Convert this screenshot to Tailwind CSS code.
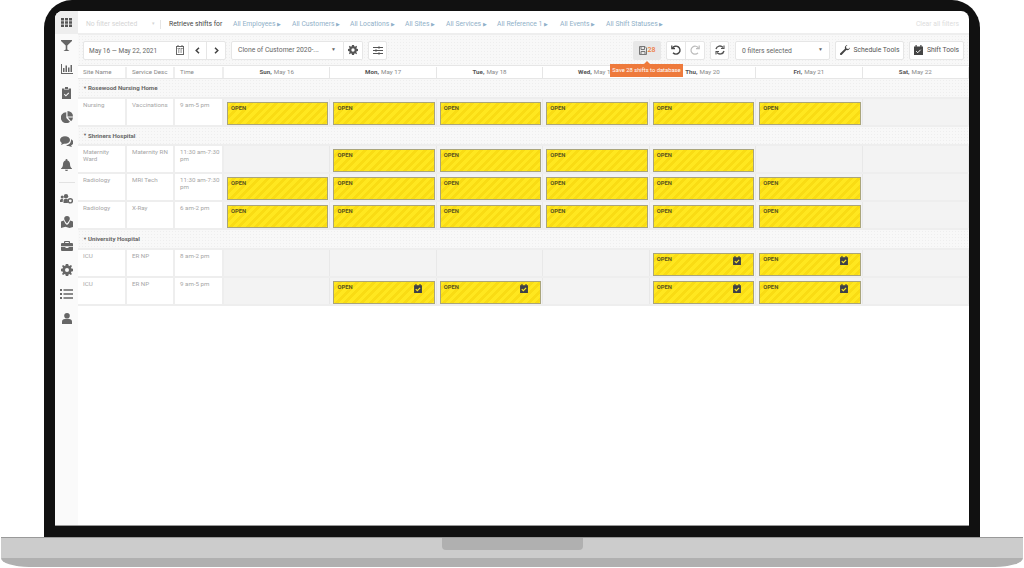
<!DOCTYPE html>
<html>

<head>
    <title>Schedule</title>
    <script src="https://cdn.jsdelivr.net/npm/@tailwindcss/browser@4"></script>
</head>

<body class="m-0 bg-white overflow-hidden font-['Roboto','Liberation_Sans',sans-serif]">
    <div class="w-[1024px] h-[568px] flex flex-col">
        <!-- laptop lid -->
        <div class="ml-[44px] w-[936px] h-[537px] shrink-0 bg-[#111111] rounded-t-[28px] p-[11px]">
            <div class="w-full h-full bg-white rounded-t-[8px] overflow-hidden flex border-b border-[#999999]">
                <!-- sidebar -->
                <div class="w-[23px] shrink-0 flex flex-col items-center text-[#666666] bg-[#fafafa]">
                    <div class="w-full h-[23px] bg-[#eeeeee] flex items-center justify-center">
                        <svg width="11" height="9" viewBox="0 0 11 9" fill="#555555"><path d="M0 0h3v2.500H0zM4 0h3v2.500H4zM8 0h3v2.500H8zM0 3.200h3v2.500H0zM4 3.200h3v2.500H4zM8 3.200h3v2.500H8zM0 6.500h3V9H0zM4 6.500h3V9H4zM8 6.500h3V9H8z"/></svg>
                    </div>
                    <div class="h-[23px] flex items-center justify-center">
                        <svg width="11" height="11" viewBox="0 0 11 11" fill="currentColor"><path d="M0 0h11v1L6.300 5.600V9.500L8.500 11H2.500L4.700 9.500V5.600L0 1z"/></svg>
                    </div>
                    <div class="h-[24px] flex items-center justify-center">
                        <svg width="12" height="10" viewBox="0 0 12 10" fill="currentColor"><path d="M0 0h1v9h11v1H0z"/><path d="M2 4h1.500v4H2zM4.500 1.500H6V8H4.500zM7 3.500h1.500V8H7zM9.500 1H11v7H9.500z"/></svg>
                    </div>
                    <div class="h-[24px] flex items-center justify-center">
                        <svg width="9" height="12" viewBox="0 0 9 12" fill="currentColor"><path d="M0 1.500h2.500V3h4V1.500H9V12H0zM3 0h3v2.500H3z"/><path d="M2.300 7.200l1.600 1.600 2.900-3" fill="none" stroke="#fafafa" stroke-width="1.100"/></svg>
                    </div>
                    <div class="h-[24px] flex items-center justify-center">
                        <svg width="12" height="12" viewBox="0 0 12 12" fill="currentColor"><path d="M5.300 1.200v5.900l3.700 3.700A5.500 5.500 0 1 1 5.300 1.200z"/><path d="M6.500 0A5.500 5.500 0 0 1 12 5.500H6.500z"/><path d="M6.900 6.500H12a5.500 5.500 0 0 1-2 3.700z"/></svg>
                    </div>
                    <div class="h-[24px] flex items-center justify-center">
                        <svg width="13" height="11" viewBox="0 0 13 11" fill="currentColor"><ellipse cx="5" cy="4" rx="5" ry="3.800"/><path d="M2 6.500L1 9l3.500-1.500z"/><path d="M11 3.200a4 3.500 0 0 1 0 6.300l1 1.500-3.600-1a6 6 0 0 1-2.400-.6c3-.2 5.300-2.500 5-6.200z"/></svg>
                    </div>
                    <div class="h-[23px] flex items-center justify-center">
                        <svg width="11" height="12" viewBox="0 0 11 12" fill="currentColor"><path d="M5.500 0a1 1 0 0 1 1 1v.4C8.300 2 9 3.400 9 5c0 2.500.7 3.400 2 4.500V10H0v-.5C1.300 8.400 2 7.500 2 5c0-1.600.7-3 2.500-3.600V1a1 1 0 0 1 1-1zM4 10.700h3a1.500 1.300 0 0 1-3 0z"/></svg>
                    </div>
                    <div class="w-[16px] h-px bg-[#e2e2e2] mt-[6px] mb-[4px]"></div>
                    <div class="h-[23px] flex items-center justify-center">
                        <svg width="13" height="10" viewBox="0 0 13 10" fill="currentColor"><circle cx="2.200" cy="3" r="1.500"/><circle cx="6" cy="2.300" r="2.200"/><path d="M0 8V6.500C0 5.500.8 5 2 5h1L2.700 8zM3.500 9V6.500C3.500 5.300 4.500 5 6 5c.8 0 1.400.1 1.900.4V9z"/><circle cx="10.300" cy="6.800" r="2.100" fill="none" stroke="currentColor" stroke-width="1.400"/></svg>
                    </div>
                    <div class="h-[24px] flex items-center justify-center">
                        <svg width="12" height="12" viewBox="0 0 12 12" fill="currentColor"><path d="M6 0a2.800 2.800 0 0 1 2.800 2.800C8.800 4.500 6 7.500 6 7.500S3.200 4.500 3.200 2.800A2.800 2.800 0 0 1 6 0z"/><path d="M0 5.500l2.800-1 1.500 3L6 9l1.700-1.500 1.500-3 2.800 1V11l-3.500 1-4-1.300L0 12z"/></svg>
                    </div>
                    <div class="h-[24px] flex items-center justify-center">
                        <svg width="12" height="10" viewBox="0 0 12 10" fill="currentColor"><path d="M4 0h4a1 1 0 0 1 1 1v1h2a1 1 0 0 1 1 1v2.200H0V3a1 1 0 0 1 1-1h2V1a1 1 0 0 1 1-1zm.2 1v1h3.600V1zM0 6h4.500v1h3V6H12v3a1 1 0 0 1-1 1H1a1 1 0 0 1-1-1z"/></svg>
                    </div>
                    <div class="h-[24px] flex items-center justify-center">
                        <svg width="12" height="12" viewBox="0 0 12 12" fill="currentColor"><path fill-rule="evenodd" d="M4.800 0h2.400l.3 1.600 1 .4L9.900 1l1.100 1.100-1 1.400.4 1 1.600.3v2.400l-1.600.3-.4 1-.1.100 1 1.300L9.900 11l-1.400-1-1 .4-.3 1.600H4.800l-.3-1.600-1-.4-1.400 1L1 9.900l1-1.300-.4-1.100L0 7.200V4.800l1.600-.3.400-1-1-1.400L2.100 1l1.400 1 1-.4zM6 4a2 2 0 1 0 0 4 2 2 0 0 0 0-4z"/></svg>
                    </div>
                    <div class="h-[24px] flex items-center justify-center">
                        <svg width="13" height="10" viewBox="0 0 13 10" fill="currentColor"><path d="M0 0h2v2H0zM3.500 .2H13v1.600H3.500zM0 4h2v2H0zM3.500 4.200H13v1.600H3.500zM0 8h2v2H0zM3.500 8.200H13v1.600H3.500z"/></svg>
                    </div>
                    <div class="h-[24px] flex items-center justify-center">
                        <svg width="10" height="11" viewBox="0 0 10 11" fill="currentColor"><circle cx="5" cy="2.800" r="2.800"/><path d="M0 11V8.600C0 7 1.200 6 2.800 6h4.400C8.800 6 10 7 10 8.600V11z"/></svg>
                    </div>
                </div>

                <!-- main -->
                <div class="flex-1 min-w-0 flex flex-col">
                    <!-- filter bar -->
                    <div class="h-[24px] shrink-0 flex items-center pl-[8px] pr-[10px] pt-[4px] text-[6.8px] border-b-2 border-[#eeeeee] text-[#8fb0c8] whitespace-nowrap">
                        <span class="text-[#d4d4d4] w-[66px]">No filter selected</span>
                        <span class="text-[#d4d4d4] text-[5px]">▾</span>
                        <span class="w-px h-[9px] bg-[#e5e5e5] ml-[5px] mr-[8px]"></span>
                        <span class="text-[#444444] w-[64px]">Retrieve shifts for</span>
                        <span class="w-[59px]">All Employees <span class="text-[5px]">▶</span></span>
                        <span class="w-[58px]">All Customers <span class="text-[5px]">▶</span></span>
                        <span class="w-[55px]">All Locations <span class="text-[5px]">▶</span></span>
                        <span class="w-[41px]">All Sites <span class="text-[5px]">▶</span></span>
                        <span class="w-[51px]">All Services <span class="text-[5px]">▶</span></span>
                        <span class="w-[63px]">All Reference 1 <span class="text-[5px]">▶</span></span>
                        <span class="w-[46px]">All Events <span class="text-[5px]">▶</span></span>
                        <span>All Shift Statuses <span class="text-[5px]">▶</span></span>
                        <span class="ml-auto text-[#dddddd]">Clear all filters</span>
                    </div>

                    <!-- toolbar -->
                    <div class="h-[30px] shrink-0 flex items-center pl-[5px] pr-[5px] bg-[#f8f8f8] bg-[radial-gradient(#eeeeee_0.5px,transparent_0.6px)] bg-[length:3px_3px] text-[#666666] text-[6.8px] whitespace-nowrap">
                        <div class="h-[19px] flex bg-white border border-[#e6e6e6] rounded-[2px] items-center">
                            <span class="w-[92px] pl-[5px] mt-[3px] text-[6.5px]">May 16 — May 22, 2021</span>
                            <svg class="mr-[4px]" width="8" height="10" viewBox="0 0 8 10" fill="none" stroke="#666666"><rect x=".5" y="1.500" width="7" height="8"/><path d="M0 3.500h8M2 0v2M6 0v2M2 5h4M2 7h4" stroke-dasharray="1 .6"/></svg>
                            <span class="w-[19px] h-full border-x border-[#e6e6e6] flex items-center justify-center">
                                <svg width="5" height="7" viewBox="0 0 5 7" fill="none" stroke="#444444" stroke-width="1.500"><path d="M4 .7L1.200 3.500 4 6.300"/></svg>
                            </span>
                            <span class="w-[18px] flex items-center justify-center">
                                <svg width="5" height="7" viewBox="0 0 5 7" fill="none" stroke="#444444" stroke-width="1.500"><path d="M1 .7l2.800 2.800L1 6.300"/></svg>
                            </span>
                        </div>
                        <div class="ml-[5px] w-[113px] h-[19px] flex items-center bg-white border border-[#e6e6e6] rounded-l-[2px] pl-[6px]">
                            <span class="w-[93px] mt-[1px]">Clone of Customer 2020-...</span>
                            <span class="text-[5px]">▼</span>
                        </div>
                        <div class="w-[19px] h-[19px] flex items-center justify-center bg-white border border-l-0 border-[#e6e6e6] rounded-r-[2px]">
                            <svg width="10" height="10" viewBox="0 0 12 12" fill="#555555"><path fill-rule="evenodd" d="M4.800 0h2.400l.3 1.600 1 .4L9.900 1l1.100 1.100-1 1.400.4 1 1.600.3v2.400l-1.600.3-.4 1-.1.100 1 1.300L9.900 11l-1.400-1-1 .4-.3 1.600H4.800l-.3-1.600-1-.4-1.400 1L1 9.900l1-1.300-.4-1.100L0 7.200V4.800l1.600-.3.400-1-1-1.400L2.100 1l1.400 1 1-.4zM6 4a2 2 0 1 0 0 4 2 2 0 0 0 0-4z"/></svg>
                        </div>
                        <div class="ml-[5px] w-[19px] h-[19px] flex items-center justify-center bg-white border border-[#e6e6e6] rounded-[2px]">
                            <svg width="10" height="9" viewBox="0 0 10 9" fill="none" stroke="#555555"><path d="M0 1.500h10M0 4.500h10M0 7.500h10"/><path d="M6 .5v2M3 3.500v2M6 6.500v2" stroke-width="1.500"/></svg>
                        </div>

                        <div class="relative ml-[246px] w-[28px] h-[19px] flex items-center justify-center gap-[1px] bg-[#e8e8e8] rounded-[2px]">
                            <svg width="8" height="9" viewBox="0 0 8 9" fill="none" stroke="#777777"><path d="M.5.500h5.500l1.500 1.500v6.500h-7z"/><path d="M2 .5v3h3.500v-3M2 8.500V5.500h4v3"/></svg>
                            <span class="text-[#ee7a3c] text-[7px] font-medium">28</span>
                            <!-- tooltip -->
                            <div class="absolute top-[23px] left-[-23px] w-[73px] h-[13px] bg-[#ee7a3c] text-white text-[5.8px] flex items-center justify-center z-10">
                                <span class="absolute -top-[3px] left-[34px] w-0 h-0 border-x-[3px] border-x-transparent border-b-[3px] border-b-[#ee7a3c]"></span>
                                Save 28 shifts to database
                            </div>
                        </div>

                        <div class="ml-[5px] w-[39px] h-[19px] flex bg-white border border-[#e6e6e6] rounded-[2px]">
                            <span class="w-1/2 border-r border-[#e6e6e6] flex items-center justify-center">
                                <svg width="10" height="10" viewBox="0 0 10 10" fill="none" stroke="#444444" stroke-width="1.400"><path d="M1.500 3.200A4 4 0 1 1 2 7.800"/><path d="M.8.500v3.200H4" stroke-width="1.200"/></svg>
                            </span>
                            <span class="w-1/2 flex items-center justify-center">
                                <svg width="10" height="10" viewBox="0 0 10 10" fill="none" stroke="#bbbbbb" stroke-width="1.200"><path d="M8.500 3.200A4 4 0 1 0 8 7.800"/><path d="M9.200.5v3.200H6"/></svg>
                            </span>
                        </div>
                        <div class="ml-[5px] w-[19px] h-[19px] flex items-center justify-center bg-white border border-[#e6e6e6] rounded-[2px]">
                            <svg width="10" height="10" viewBox="0 0 10 10" fill="none" stroke="#555555" stroke-width="1.400"><path d="M1 4a4 4 0 0 1 7-1.500M9 6a4 4 0 0 1-7 1.500"/><path d="M9 .5v3H6M1 9.500v-3h3" stroke-width="1.100"/></svg>
                        </div>
                        <div class="ml-[6px] w-[95px] h-[19px] flex items-center justify-between px-[6px] bg-white border border-[#e6e6e6] rounded-[2px]">
                            <span class="mt-[2px]">0 filters selected</span>
                            <span class="text-[5px]">▼</span>
                        </div>
                        <div class="ml-[5px] w-[69px] h-[19px] flex items-center justify-center gap-[4px] bg-white border border-[#e6e6e6] rounded-[2px] text-[#555555]">
                            <svg width="10" height="10" viewBox="0 0 10 10" fill="#444444"><path d="M10 2.500A2.800 2.800 0 0 1 6.300 5L1.800 9.700A1 1 0 0 1 .3 8.200L5 3.700A2.800 2.800 0 0 1 7.500 0L6 1.600l.4 2 2 .4z"/></svg>
                            <span class="mt-[1px]">Schedule Tools</span>
                        </div>
                        <div class="ml-[5px] w-[55px] h-[19px] flex items-center justify-center gap-[4px] bg-white border border-[#e6e6e6] rounded-[2px] text-[#555555]">
                            <svg width="9" height="10" viewBox="0 0 9 10" fill="#444444"><path d="M0 1.500h1.500V0h1.200v1.500h3.600V0h1.200v1.500H9V10H0z"/><path d="M2.200 6.200l1.500 1.500 3-3" fill="none" stroke="#ffffff"/></svg>
                            <span class="mt-[1px]">Shift Tools</span>
                        </div>
                    </div>

                    <!-- schedule grid, rows are filled in below -->
                    <div id="header" class="h-[14px] shrink-0 grid grid-cols-[49px_48px_49px_repeat(7,1fr)] text-[6.2px] text-[#888888] bg-white border-y border-[#e6e6e6] pt-[1px]"></div>
                    <div id="rows" class="flex flex-col"></div>
                </div>
            </div>
        </div>

        <!-- laptop base -->
        <div class="ml-[1px] w-[1022px] h-[30px] shrink-0 flex flex-col overflow-hidden rounded-b-[28px_9px] border-t border-[#999999]">
            <div class="h-[20px] shrink-0 bg-[#cccccc] flex justify-center">
                <div class="w-[141px] h-[12px] bg-[#b0b0b0] rounded-b-[4px]"></div>
            </div>
            <div class="flex-1 bg-[#b0b0b0]"></div>
        </div>
    </div>

    <script>
        const days = [
            ['Sun,', 'May 16'], ['Mon,', 'May 17'], ['Tue,', 'May 18'], ['Wed,', 'May 19'],
            ['Thu,', 'May 20'], ['Fri,', 'May 21'], ['Sat,', 'May 22']
        ];

        // group title, or [site, service, time, open days, days with a check icon]
        const schedule = [
            'Rosewood Nursing Home',
            ['Nursing', 'Vaccinations', '9 am-5 pm', [0, 1, 2, 3, 4, 5], []],
            'Shriners Hospital',
            ['Maternity<br>Ward', 'Maternity RN', '11:30 am-7:30 pm', [1, 2, 3, 4], []],
            ['Radiology', 'MRI Tech', '11:30 am-7:30 pm', [0, 1, 2, 3, 4, 5], []],
            ['Radiology', 'X-Ray', '6 am-2 pm', [0, 1, 2, 3, 4, 5], []],
            'University Hospital',
            ['ICU', 'ER NP', '8 am-2 pm', [4, 5], [4, 5]],
            ['ICU', 'ER NP', '9 am-5 pm', [1, 2, 4, 5], [1, 2, 4, 5]]
        ];

        const labelCell = 'pl-[5px] flex items-center border-r-2 border-[#eeeeee]';
        const bodyCell = 'pl-[5px] pt-[3px] leading-[7px] border-r-2 border-[#eeeeee]';
        const checkIcon = '<svg class="absolute right-[12px] top-[2px]" width="8" height="9" viewBox="0 0 7 8"><path d="M0 1h1.200V0h1v1h2.600V0h1v1H7v7H0z" fill="#3d4048"/><path d="M1.500 4.600l1.400 1.400 2.500-2.600" fill="none" stroke="#ffe71f"/></svg>';

        let head = ['Site Name', 'Service Desc', 'Time'].map(t =>
            `<div class="${labelCell}">${t}</div>`).join('');
        head += days.map(d =>
            `<div class="flex items-center justify-center border-r border-[#e6e6e6]"><b class="font-bold text-[#555555] mr-[2px]">${d[0]}</b>${d[1]}</div>`).join('');
        document.getElementById('header').innerHTML = head;

        document.getElementById('rows').innerHTML = schedule.map(row => {
            if (typeof row === 'string') {
                return `<div class="h-[19.5px] flex items-center pl-[5px] text-[6.1px] font-bold text-[#666666] bg-[#f8f8f8] bg-[radial-gradient(#eeeeee_0.5px,transparent_0.6px)] bg-[length:3px_3px] border-b-2 border-[#eeeeee]"><span class="text-[4px] mr-[1px]">▼</span>${row}</div>`;
            }
            let cells = row.slice(0, 3).map(t =>
                `<div class="${bodyCell}">${t}</div>`).join('');
            for (let i = 0; i < 7; i++) {
                const open = row[3].includes(i);
                const icon = row[4].includes(i) ? checkIcon : '';
                cells += `<div class="bg-[#f3f3f3] border-r border-[#e8e8e8] pl-[3px] pr-[1px] pt-[3px]">` +
                    (open ? `<div class="relative h-full pl-[3px] pt-[2px] border border-[#aaa57a] text-[5.8px] leading-[7px] font-bold text-[#5a5320] bg-[repeating-linear-gradient(135deg,#ffe71f_0,#ffe71f_3px,#f9dc14_3px,#f9dc14_6px)]">OPEN${icon}</div>` : '') +
                    `</div>`;
            }
            return `<div class="h-[28px] grid grid-cols-[49px_48px_49px_repeat(7,1fr)] text-[6.2px] text-[#a6a6a6] border-b-2 border-[#eeeeee]">${cells}</div>`;
        }).join('');
    </script>
</body>

</html>
